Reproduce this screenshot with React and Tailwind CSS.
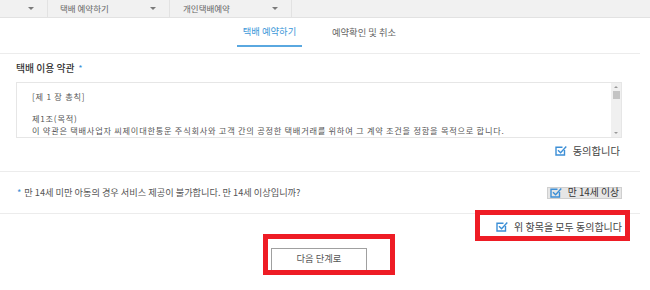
import React from 'react';

const font = { fontFamily: '"Noto Sans CJK KR", "Noto Sans", sans-serif' };

const CheckIcon = ({ className = '' }) => (
  <svg width="12" height="11" viewBox="0 0 12 11" className={className}>
    <path d="M9.5 5V10H1V2.2h6.5" fill="none" stroke="#3d8fd6" strokeWidth="1.4" />
    <path d="M3 5.2l2.6 2.6L11.3 1.5" fill="none" stroke="#3d8fd6" strokeWidth="1.4" />
  </svg>
);

const Caret = () => (
  <span className="w-0 h-0 border-l-[3px] border-r-[3px] border-t-[3px] border-l-transparent border-r-transparent border-t-[#7a7a7a]" />
);

export default function App() {
  return (
    <div className="relative w-[650px] h-[290px] bg-white overflow-hidden text-[#555]" style={font}>
      {/* top navigation bar */}
      <div className="flex h-[18px] bg-[#f1f1f1] border-b border-[#e2e2e2] text-[8.5px] text-[#666]">
        <div className="w-[48px] flex items-center justify-end pr-[13px] border-r border-[#e2e2e2]">
          <Caret />
        </div>
        <div className="w-[122px] flex items-center justify-between pl-[12px] pr-[13px] border-r border-[#e2e2e2]">
          <span>택배 예약하기</span>
          <Caret />
        </div>
        <div className="w-[122px] flex items-center justify-between pl-[13px] pr-[13px] border-r border-[#e2e2e2]">
          <span>개인택배예약</span>
          <Caret />
        </div>
        <div className="flex-1" />
      </div>

      {/* tabs */}
      <div className="w-[640px] flex h-[29px] text-[9.3px]">
        <div className="ml-[237px] w-[65px] flex items-center justify-center text-[#3c97d8] border-b-[2px] border-[#5aa8e0]">
          택배 예약하기
        </div>
        <div className="ml-[30px] flex items-center text-[#666]">예약확인 및 취소</div>
      </div>
      <div className="w-[640px] mt-[6px] border-b border-[#ececec]" />

      {/* terms */}
      <div className="w-[640px] pl-[16px] pr-[18px]">
        <div className="h-[28px] flex items-center text-[9.8px] text-[#333] font-medium">
          택배 이용 약관 <span className="ml-[4px] text-[#3d8fd6] text-[8px]">*</span>
        </div>
        <div className="relative h-[56px] border border-[#e6e6e6] text-[8.2px] tracking-[0.75px] leading-[12px] text-[#555] pl-[15px] pt-[7px] overflow-hidden">
          <p>[제 1 장 총칙]</p>
          <p className="mt-[10px]">제1조(목적)</p>
          <p>이 약관은 택배사업자 씨제이대한통운 주식회사와 고객 간의 공정한 택배거래를 위하여 그 계약 조건을 정함을 목적으로 합니다.</p>
          <div className="absolute right-0 top-0 bottom-0 w-[10px] bg-[#f0f0f0] flex flex-col items-center">
            <span className="mt-[3px] w-0 h-0 border-l-[2px] border-r-[2px] border-b-[2px] border-l-transparent border-r-transparent border-b-[#999]" />
            <div className="w-[7px] h-[8px] bg-[#c4c4c4] mt-[3px]" />
            <span className="mt-auto mb-[3px] w-0 h-0 border-l-[2px] border-r-[2px] border-t-[2px] border-l-transparent border-r-transparent border-t-[#999]" />
          </div>
        </div>
        <div className="h-[25px] flex items-center justify-end gap-[6px] pr-[2px] text-[10.3px] text-[#444]">
          <CheckIcon />
          <span>동의합니다</span>
        </div>
      </div>
      <div className="w-[640px] mt-[8px] border-b border-[#ececec]" />

      {/* age check */}
      <div className="w-[640px] h-[42px] flex items-center justify-between pl-[17px] pr-[18px] border-b border-[#ececec] text-[9.2px]">
        <span>
          <span className="text-[#3d8fd6] mr-[3px]">*</span>만 14세 미만 아동의 경우 서비스 제공이 불가합니다. 만 14세 이상입니까?
        </span>
        <span className="flex items-center gap-[6px] bg-[#e6e6e6] border border-[#cfcfcf] px-[2px] h-[12px] text-[9.8px] text-[#333]">
          <CheckIcon />
          <span>만 14세 이상</span>
        </span>
      </div>

      {/* agree all */}
      <div className="w-[640px] h-[24px] flex items-center justify-end gap-[6px] pr-[18px] text-[10px] text-[#444]">
        <CheckIcon />
        <span>위 항목을 모두 동의합니다</span>
      </div>

      {/* next button */}
      <div className="flex justify-start pl-[271px] mt-[10px]">
        <button className="w-[96px] h-[24px] border border-[#a0a0a0] bg-white text-[9.3px] text-[#555] pb-[3px]">
          다음 단계로
        </button>
      </div>

      {/* red annotation boxes */}
      <div className="absolute left-[475px] top-[210px] w-[155px] h-[31px] border-[5px] border-[#ee1c25]" />
      <div className="absolute left-[263px] top-[234px] w-[132px] h-[41px] border-[5px] border-[#ee1c25]" />
    </div>
  );
}
